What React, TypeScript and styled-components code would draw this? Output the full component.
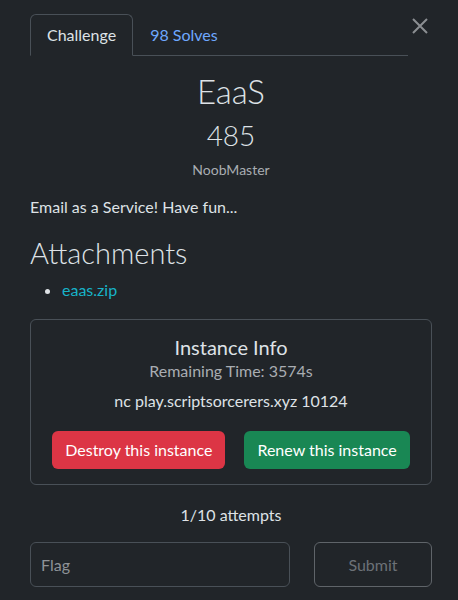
import React from 'react'
import styled, { createGlobalStyle } from 'styled-components'

const GlobalStyle = createGlobalStyle`
  html, body {
    margin: 0;
    background: #212529;
    color: #dee2e6;
    font-family: Lato, "Liberation Sans", sans-serif;
    font-size: 16px;
  }
`

const Modal = styled.div`
  padding: 14px 26px 20px 30px;
`

const Header = styled.div`
  display: flex;
  align-items: flex-start;
`

const Tabs = styled.div`
  flex: 1;
  display: flex;
  border-bottom: 1px solid #495057;
`

const Tab = styled.div<{ $active?: boolean }>`
  padding: 8px 16px;
  line-height: 24px;
  margin-bottom: -1px;
  border: 1px solid transparent;
  border-radius: 6px 6px 0 0;
  color: #6ea8fe;
  ${(p) =>
    p.$active &&
    `
    color: #dee2e6;
    border-color: #495057 #495057 #212529;
    background: #212529;
  `}
`

const Close = styled.button`
  width: 24px;
  height: 24px;
  padding: 0;
  border: 0;
  background: none;
  display: flex;
  align-items: center;
  justify-content: center;
  color: #8b8e92;
`

const Center = styled.div`
  text-align: center;
`

const Title = styled.h2`
  margin: 16px 0 0;
  font-size: 33px;
  font-weight: 300;
  line-height: 38px;
`

const Value = styled.h3`
  margin: 9px 0 0;
  font-size: 28px;
  font-weight: 300;
  line-height: 1.2;
`

const Author = styled.div`
  margin-top: 9px;
  font-size: 14px;
  line-height: 1.2;
  color: #a9adb2;
`

const Description = styled.p`
  margin: 17px 0 0;
  line-height: 24px;
`

const SectionTitle = styled.h4`
  margin: 17px 0 0;
  font-size: 29px;
  font-weight: 300;
  line-height: 1.2;
`

const FileList = styled.ul`
  margin: 7px 0 0;
  padding-left: 32px;
  line-height: 24px;
`

const FileLink = styled.a`
  color: #17b3c8;
  text-decoration: none;
`

const Card = styled.div`
  margin-top: 17px;
  border: 1px solid #495057;
  border-radius: 6px;
  padding: 15px 20px 15px;
  text-align: center;
`

const CardTitle = styled.h5`
  margin: 0;
  font-size: 20px;
  font-weight: 400;
  line-height: 24px;
`

const Muted = styled.div`
  color: #a9adb2;
  line-height: 24px;
`

const Connection = styled.div`
  margin-top: 6px;
  line-height: 24px;
`

const Actions = styled.div`
  margin-top: 18px;
  display: flex;
  justify-content: center;
  gap: 19px;
`

const Button = styled.button<{ $variant: 'danger' | 'success' }>`
  font-family: inherit;
  font-size: 16px;
  line-height: 24px;
  padding: 6px 12px;
  border: 1px solid transparent;
  border-radius: 6px;
  color: #fff;
  background: ${(p) => (p.$variant === 'danger' ? '#dc3545' : '#198754')};
`

const Attempts = styled.div`
  margin-top: 18px;
  text-align: center;
  line-height: 24px;
`

const SubmitRow = styled.div`
  margin-top: 15px;
  display: grid;
  grid-template-columns: 1fr 118px;
  gap: 24px;
`

const FlagInput = styled.input`
  box-sizing: border-box;
  height: 45px;
  padding: 0 10px;
  font-family: inherit;
  font-size: 16px;
  color: #dee2e6;
  background: #212529;
  border: 1px solid #495057;
  border-radius: 6px;
  &::placeholder {
    color: #8e9297;
  }
`

const SubmitButton = styled.button`
  height: 45px;
  font-family: inherit;
  font-size: 16px;
  color: #6c7177;
  background: transparent;
  border: 1px solid #5f6469;
  border-radius: 6px;
`

export default function App() {
  return (
    <Modal>
      <GlobalStyle />
      <Header>
        <Tabs>
          <Tab $active>Challenge</Tab>
          <Tab>98 Solves</Tab>
        </Tabs>
        <Close aria-label="Close">
          <svg width="16" height="16" viewBox="0 0 16 16">
            <path d="M1 1L15 15M15 1L1 15" stroke="currentColor" strokeWidth="2" />
          </svg>
        </Close>
      </Header>
      <Center>
        <Title>EaaS</Title>
        <Value>485</Value>
        <Author>NoobMaster</Author>
      </Center>
      <Description>Email as a Service! Have fun...</Description>
      <SectionTitle>Attachments</SectionTitle>
      <FileList>
        <li>
          <FileLink href="#">eaas.zip</FileLink>
        </li>
      </FileList>
      <Card>
        <CardTitle>Instance Info</CardTitle>
        <Muted>Remaining Time: 3574s</Muted>
        <Connection>nc play.scriptsorcerers.xyz 10124</Connection>
        <Actions>
          <Button $variant="danger">Destroy this instance</Button>
          <Button $variant="success">Renew this instance</Button>
        </Actions>
      </Card>
      <Attempts>1/10 attempts</Attempts>
      <SubmitRow>
        <FlagInput placeholder="Flag" />
        <SubmitButton disabled>Submit</SubmitButton>
      </SubmitRow>
    </Modal>
  )
}
